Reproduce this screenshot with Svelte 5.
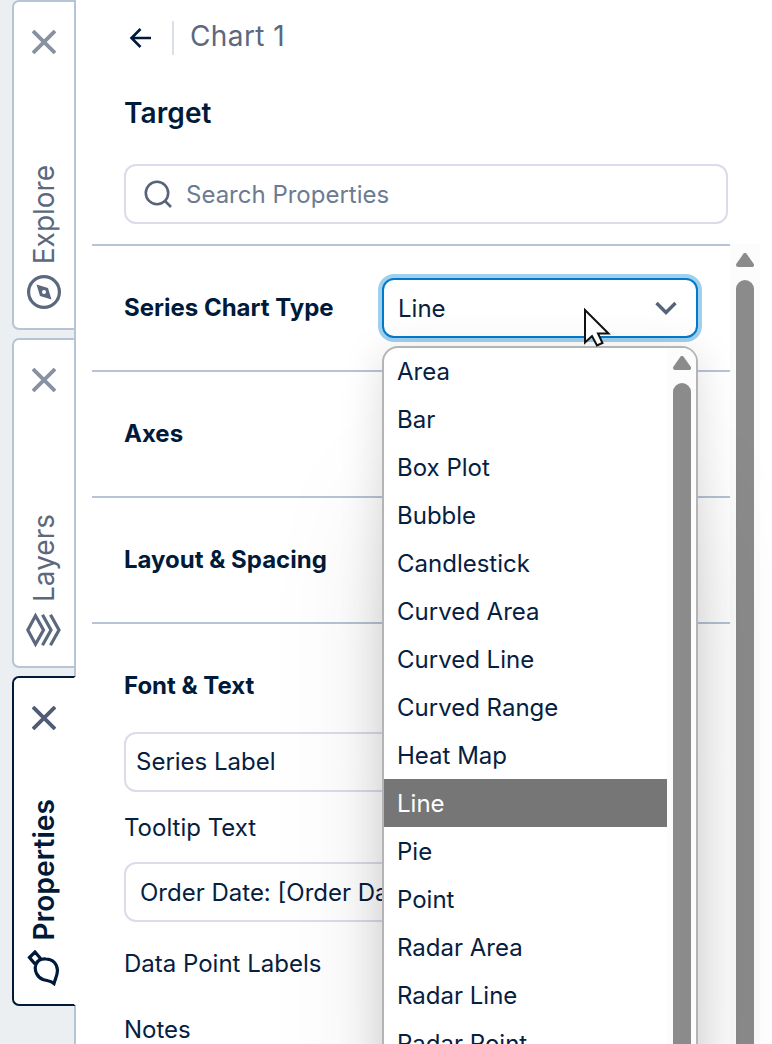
<script>
  const tabs = [
    { name: "Explore", icon: "compass" },
    { name: "Layers", icon: "layers" },
    { name: "Properties", icon: "brush" },
  ];

  const chartTypes = [
    "Area",
    "Bar",
    "Box Plot",
    "Bubble",
    "Candlestick",
    "Curved Area",
    "Curved Line",
    "Curved Range",
    "Heat Map",
    "Line",
    "Pie",
    "Point",
    "Radar Area",
    "Radar Line",
    "Radar Point",
  ];

  let activeTab = $state("Properties");
  let chartType = $state("Line");
  let open = $state(true);

  function pick(type) {
    chartType = type;
    open = false;
  }
</script>

<div class="app">
  <nav class="rail">
    {#each tabs as tab}
      <div class="tab" class:active={tab.name === activeTab}>
        <button class="close" aria-label="Close {tab.name}">
          <svg width="24" height="24" viewBox="0 0 24 24">
            <path d="M1 1L23 23M23 1L1 23" />
          </svg>
        </button>
        <button class="tab-name" onclick={() => (activeTab = tab.name)}>
          <span>{tab.name}</span>
          <svg class="icon" width="36" height="36" viewBox="0 0 36 36">
            {#if tab.icon === "compass"}
              <circle cx="18" cy="18" r="15.4" />
              <path
                class="solid"
                d="M10.500 10.500L22 14L25.500 25.500L14 22ZM18 16A2 2 0 1 0 18 20A2 2 0 1 0 18 16Z"
              />
            {:else if tab.icon === "layers"}
              <path d="M9.500 3.800L1.800 18L9.500 32.200L17.500 18Z" />
              <path d="M16.500 2.800L25 18L16.500 33.200M24.500 2.800L33 18L24.500 33.200" />
            {:else}
              <path
                d="M3.500 7.500L9 2L14.500 8.500L9.500 14.500ZM9.500 16C10 11 15 8.500 20 9C27 9 31 14 31.500 20C31.500 25 29.500 28 28 33.500C24 30 21 31 17 29.500C11 27 8.500 21 9.500 16Z"
              />
            {/if}
          </svg>
        </button>
      </div>
    {/each}
  </nav>

  <main class="panel">
    <header>
      <button class="back" aria-label="Back">
        <svg width="24" height="24" viewBox="0 0 24 24">
          <path d="M23 12H3M12.500 3L3.500 12L12.500 21" />
        </svg>
      </button>
      <span class="crumb">Chart 1</span>
    </header>
    <h1>Target</h1>
    <label class="search">
      <svg width="30" height="30" viewBox="0 0 30 30">
        <circle cx="14" cy="14" r="11.200" />
        <path d="M22 22L28 28" />
      </svg>
      <span>Search Properties</span>
    </label>

    <div class="scroll">
      <div class="sections">
        <section>
          <div class="row">
            <h2>Series Chart Type</h2>
            <div class="select-wrap">
              <button class="select" onclick={() => (open = !open)}>
                {chartType}
                <svg width="24" height="16" viewBox="0 0 24 16">
                  <path d="M2.500 3L12 12.500L21.500 3" />
                </svg>
              </button>
              {#if open}
                <div class="popup">
                  <ul>
                    {#each chartTypes as type}
                      <li>
                        <button
                          class:selected={type === chartType}
                          onclick={() => pick(type)}>{type}</button
                        >
                      </li>
                    {/each}
                  </ul>
                  <div class="bar">
                    <svg width="18" height="14" viewBox="0 0 18 14">
                      <path d="M9 2L16 12H2Z" />
                    </svg>
                    <div class="thumb"></div>
                  </div>
                </div>
              {/if}
              <svg class="cursor" width="28" height="40" viewBox="0 0 28 40">
                <path d="M2 2V34.500L9 28L14 37.500L19.500 35L15 25.500H25.500Z" />
              </svg>
            </div>
          </div>
        </section>
        <section><div class="row"><h2>Axes</h2></div></section>
        <section><div class="row"><h2>Layout &amp; Spacing</h2></div></section>
        <section>
          <div class="row"><h2>Font &amp; Text</h2></div>
          <div class="fields">
            <div class="input">Series Label</div>
            <div class="field-name">Tooltip Text</div>
            <div class="input multi">Order Date: [Order Date]</div>
            <div class="field-name tall">Data Point Labels</div>
            <div class="field-name">Notes</div>
          </div>
        </section>
      </div>
      <div class="bar">
        <svg width="18" height="14" viewBox="0 0 18 14">
          <path d="M9 2L16 12H2Z" />
        </svg>
        <div class="thumb"></div>
      </div>
    </div>
  </main>
</div>

<style>
  :global(body) {
    margin: 0;
    overflow: hidden;
  }

  .app {
    --navy: #06203f;
    --slate: #5b687e;
    --line: #b6c4d5;
    display: flex;
    height: 1044px;
    overflow: hidden;
    background: #fff;
    color: var(--navy);
    font-family: Inter, sans-serif;
    font-size: 24px;
    font-weight: 400;
  }

  button {
    font: inherit;
    color: inherit;
    letter-spacing: inherit;
    background: none;
    border: 0;
    padding: 0;
  }

  svg {
    display: block;
    fill: none;
    stroke: currentColor;
  }

  .rail {
    display: flex;
    flex-direction: column;
    gap: 8px;
    width: 64px;
    flex-shrink: 0;
    padding-left: 12px;
    background: #ebeff2;
    box-shadow: inset -2px 0 var(--line);
  }

  .tab {
    display: flex;
    flex-direction: column;
    align-items: center;
    justify-content: space-between;
    box-sizing: border-box;
    height: 330px;
    padding: 28px 0 18px;
    border: 2px solid var(--line);
    border-radius: 7px 0 0 7px;
    background: #fff;
    color: var(--slate);
    font-size: 28px;
  }

  .tab.active {
    border-color: #001a3a;
    border-right-color: #fff;
    color: #001a3a;
    font-weight: 600;
    letter-spacing: 0.1px;
  }

  .close svg {
    stroke: #8891a2;
    stroke-width: 3.8;
  }

  .active .close svg {
    stroke: #4e5d75;
  }

  .tab-name {
    display: flex;
    flex-direction: column;
    align-items: center;
    gap: 10px;
  }

  .tab-name span {
    writing-mode: vertical-rl;
    transform: rotate(180deg);
    line-height: 34px;
  }

  .icon {
    stroke-width: 3.2;
  }

  .icon .solid {
    fill: currentColor;
    fill-rule: evenodd;
    stroke: none;
  }

  .panel {
    display: flex;
    flex-direction: column;
    flex: 1;
    min-width: 0;
  }

  header {
    display: flex;
    align-items: center;
    height: 34px;
    margin: 21px 0 0 52px;
  }

  .back svg {
    stroke: #001a3a;
    stroke-width: 2.6;
  }

  .crumb {
    margin-left: 20px;
    padding-left: 16px;
    padding-bottom: 4px;
    border-left: 2px solid #dadfe8;
    color: var(--slate);
    font-size: 28px;
    letter-spacing: 0.4px;
    line-height: 30px;
  }

  h1 {
    margin: 41px 0 0 48px;
    color: #001a3a;
    font-size: 28px;
    font-weight: 600;
    letter-spacing: 0.1px;
    line-height: 34px;
  }

  .search {
    display: flex;
    align-items: center;
    gap: 13px;
    box-sizing: border-box;
    width: 604px;
    height: 60px;
    margin: 34px 0 20px 48px;
    padding-left: 17px;
    border: 2px solid #dadde9;
    border-radius: 12px;
    color: #6c7b92;
  }

  .search svg {
    color: #56637a;
    stroke-width: 2.6;
  }

  .scroll {
    display: flex;
    height: 800px;
    margin-left: 16px;
  }

  .sections {
    width: 638px;
  }

  section {
    border-top: 2px solid var(--line);
  }

  .row {
    display: flex;
    align-items: center;
    justify-content: space-between;
    height: 124px;
    padding: 0 32px;
  }

  h2 {
    margin: 0;
    padding-bottom: 2px;
    color: #001a3a;
    font-size: 24px;
    font-weight: 700;
  }

  .select-wrap {
    position: relative;
    width: 316px;
  }

  .select {
    display: flex;
    align-items: center;
    justify-content: space-between;
    box-sizing: border-box;
    width: 100%;
    height: 60px;
    padding: 0 18px 0 14px;
    border: 2px solid #007acc;
    border-radius: 12px;
    background: #fff;
    box-shadow: 0 0 0 4px #9fd0ee;
  }

  .select svg {
    stroke: #56637a;
    stroke-width: 3.4;
  }

  .popup {
    position: absolute;
    top: 68px;
    left: 0;
    z-index: 2;
    display: flex;
    box-sizing: border-box;
    width: 316px;
    height: 960px;
    overflow: hidden;
    border: 2px solid #b4b4b4;
    border-radius: 16px;
    background: #fff;
    box-shadow:
      0 8px 44px rgba(0, 0, 0, 0.14),
      0 140px 130px -20px rgba(0, 0, 0, 0.15);
  }

  ul {
    flex: 1;
    margin: -1px 0 0;
    padding: 0;
    list-style: none;
  }

  li button {
    display: block;
    width: 100%;
    height: 48px;
    padding-left: 13px;
    text-align: left;
  }

  li .selected {
    background: #767676;
    color: #fff;
  }

  .bar {
    display: flex;
    flex-direction: column;
    align-items: center;
    gap: 13px;
    box-sizing: border-box;
    width: 30px;
    padding-top: 9px;
    background: #fcfcfc;
  }

  .popup .bar {
    width: 29px;
    padding-top: 8px;
  }

  .bar svg {
    fill: #8b8b8b;
    stroke: #8b8b8b;
    stroke-width: 4;
    stroke-linejoin: round;
  }

  .thumb {
    width: 18px;
    flex: 1;
    border-radius: 9px 9px 0 0;
    background: #8b8b8b;
  }

  .cursor {
    position: absolute;
    top: 30px;
    left: 201px;
    z-index: 3;
    fill: #fff;
    stroke: #111;
    stroke-width: 2;
  }

  .fields {
    margin-top: -16px;
    padding: 0 32px;
  }

  .input {
    box-sizing: border-box;
    height: 60px;
    padding-left: 10px;
    border: 2px solid #dadde9;
    border-radius: 12px;
    line-height: 56px;
  }

  .input.multi {
    padding-left: 14px;
    line-height: 58px;
  }

  .field-name {
    height: 70px;
    line-height: 72px;
  }

  .field-name.tall {
    height: 72px;
    line-height: 84px;
  }
</style>
